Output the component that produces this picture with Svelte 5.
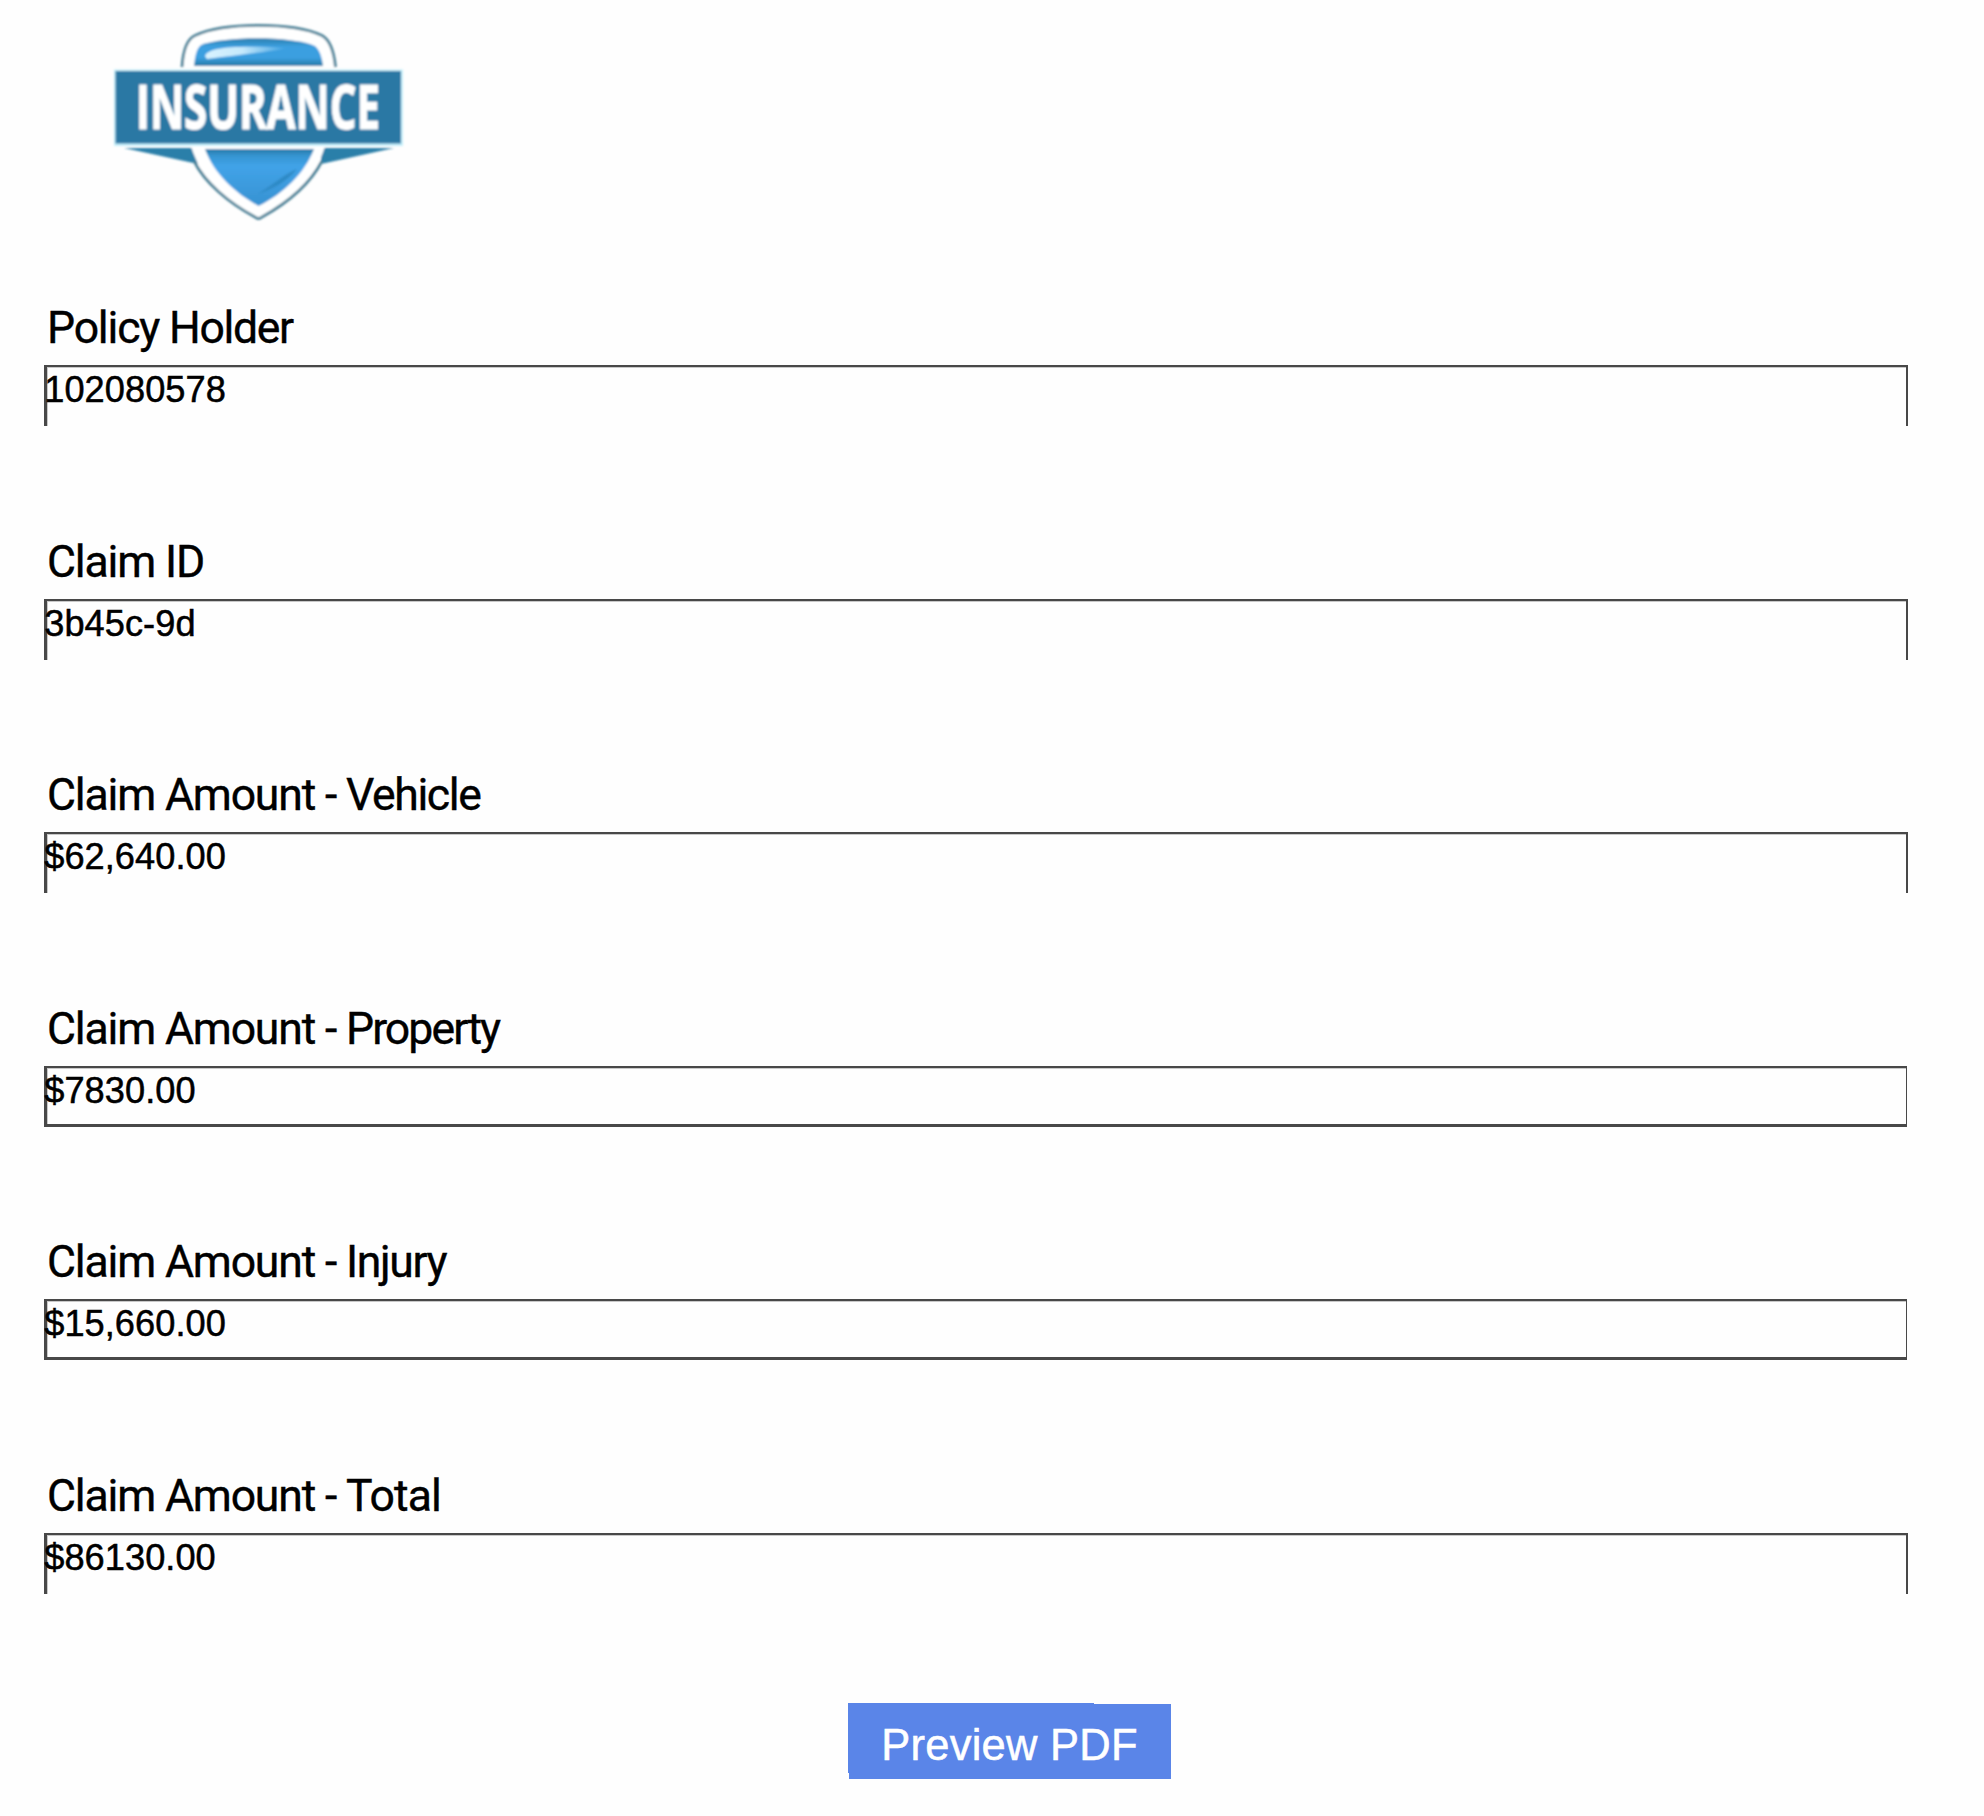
<script>
  const fields = [
    { lead: 'Policy', noun: 'Holder', tracking: -1.35, value: '102080578', closed: false },
    { lead: 'Claim', noun: 'ID', tracking: -1.1, value: '3b45c-9d', closed: false },
    { lead: 'Claim Amount -', noun: 'Vehicle', tracking: -1.35, value: '$62,640.00', closed: false },
    { lead: 'Claim Amount -', noun: 'Property', tracking: -1.9, value: '$7830.00', closed: true },
    { lead: 'Claim Amount -', noun: 'Injury', tracking: -1.35, value: '$15,660.00', closed: true },
    { lead: 'Claim Amount -', noun: 'Total', tracking: -0.85, value: '$86130.00', closed: false }
  ];
</script>

<main class="page">
  <header class="brand">
    <svg class="logo" viewBox="0 0 340 240" role="img" aria-label="Insurance">
      <defs>
        <linearGradient id="top" x1="0" y1="0" x2="0" y2="1">
          <stop offset="0" stop-color="#2a7fae" />
          <stop offset=".3" stop-color="#3b9fe0" />
          <stop offset=".7" stop-color="#3b9fe0" />
          <stop offset="1" stop-color="#2779a6" />
        </linearGradient>
        <linearGradient id="low" x1="0" y1="0" x2="0" y2="1">
          <stop offset="0" stop-color="#2779a6" />
          <stop offset=".12" stop-color="#3595d2" />
          <stop offset=".3" stop-color="#41a3e8" />
          <stop offset="1" stop-color="#3792d2" />
        </linearGradient>
        <linearGradient id="shine" x1="0" y1="0" x2="1" y2="0">
          <stop offset="0" stop-color="#d9f3ff" />
          <stop offset=".45" stop-color="#c5e9fc" />
          <stop offset="1" stop-color="#3b9fe0" />
        </linearGradient>
        <filter id="soft"><feGaussianBlur stdDeviation=".8" /></filter>
      </defs>
      <g filter="url(#soft)">
        <path d="M92 67C93 52 97 39 105 35.500C134 22 203 22 232 35.500C240 40 244 52 245.500 67" fill="#fff" stroke="#4b8298" stroke-width="2.800" />
        <path d="M104 66C105 57 106 49 111 45C136 36 202 36 225 46C230 50 232 58 233 66Z" fill="url(#top)" />
        <path d="M115 56C118 47 146 45 198 48C178 52 146 55 117 59Z" fill="url(#shine)" />
        <path d="M34 148L103 148L108 164Z" fill="#2b7fa9" />
        <path d="M304 148L231 148L231 164Z" fill="#2b7fa9" />
        <path d="M101 146C110 178 137 202 165 217Q168.500 220 172 217C201 201 228 173 235 146Z" fill="#fff" />
        <path d="M104 161C115 183 139 203 165 217Q168.500 220 172 217C199 202 220 184 232 161" fill="none" stroke="#4b8298" stroke-width="2.800" />
        <path d="M115 149H224C215 173 193 194 168.500 206C145 193 124 174 115 149Z" fill="url(#low)" />
        <path d="M207 169C198 181 183 189 168 194C180 187 194 174 207 169Z" fill="#2f8ac6" />
        <path d="M24 69.500H313V146H24Z" fill="#c6f0fb" />
        <path d="M25.500 71H311V143.500H25.500Z" fill="#2c78a4" />
        <text class="wordmark" x="46" y="129" textLength="244" lengthAdjust="spacingAndGlyphs">INSURANCE</text>
      </g>
    </svg>
  </header>

  <section class="fields">
    {#each fields as field}
      <div class="field">
        <div class="label">{field.lead} <span style:letter-spacing="{field.tracking}px">{field.noun}</span></div>
        <div class="box" class:closed={field.closed}>{field.value}</div>
      </div>
    {/each}
  </section>

  <footer class="actions">
    <button type="button">Preview PDF</button>
  </footer>
</main>

<style>
  :global(body) { background: #fefefe; }
  .page {
    box-sizing: border-box;
    height: 1816px;
    display: flex;
    flex-direction: column;
    color: #000;
  }
  .brand { height: 297px; padding-left: 90px; flex: none; }
  .logo { display: block; width: 340px; height: 240px; overflow: visible; }
  .wordmark {
    font: 700 60px "Open Sans", "Noto Sans", sans-serif;
    fill: #fff;
    stroke: #fff;
    stroke-width: 1.2px;
  }
  .fields { flex: none; padding: 0 76px 0 44px; }
  .field { height: 233.580px; }
  .label {
    height: 68px;
    padding-left: 3px;
    font: 400 44.500px/62px Roboto, sans-serif;
    letter-spacing: -1.160px;
    -webkit-text-stroke: .4px #000;
    white-space: nowrap;
  }
  .box {
    box-sizing: border-box;
    height: 61px;
    border: solid #484848;
    border-width: 2px 2px 0 3px;
    box-shadow: inset 1px 1px #c8c8c8;
    font: 400 36.200px/45px "Liberation Sans", Arial, sans-serif;
    letter-spacing: .06px;
    text-indent: -2.800px;
    -webkit-text-stroke: .5px #000;
    white-space: nowrap;
  }
  .closed {
    margin-right: 1px;
    border-width: 2px 1px 3px 3px;
  }
  .actions { padding: 4.500px 0 0 848px; }
  button {
    display: block;
    width: 323px;
    height: 76px;
    padding: 9px 0 0;
    border: 0;
    background: #5a85e8;
    clip-path: polygon(0 0, 246px 0, 246px 1px, 100% 1px, 100% 100%, 1px 100%, 1px 70px, 0 70px);
    color: #fff;
    font: 400 43.500px/67px "Liberation Sans", Arial, sans-serif;
    letter-spacing: .25px;
    -webkit-text-stroke: .5px #fff;
    text-align: center;
  }
</style>
